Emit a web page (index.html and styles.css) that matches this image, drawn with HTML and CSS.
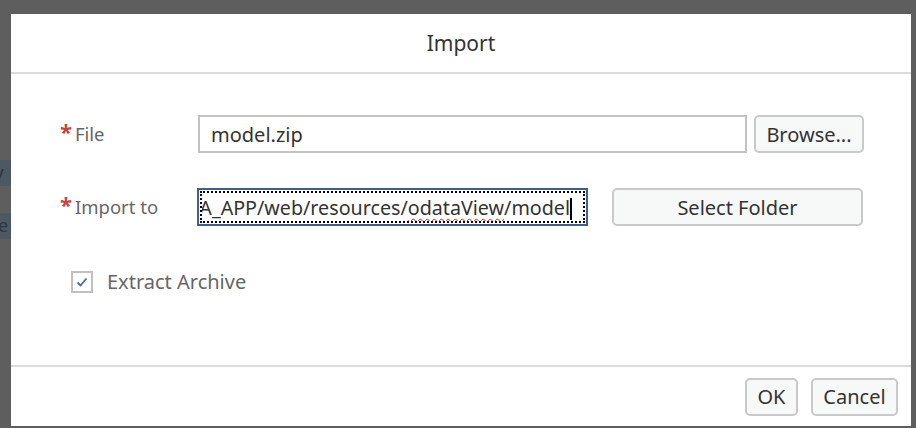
FILE: index.html
```html
<!DOCTYPE html>
<html>
<head>
<meta charset="utf-8">
<link rel="stylesheet" href="styles.css">
</head>
<body>
<div class="backdrop">
  <div class="bg-strip">
    <div class="bg-item bg-item-1">ry</div>
    <div class="bg-item bg-item-2">e</div>
  </div>
  <div class="dialog">
    <div class="header">Import</div>
    <div class="content">
      <div class="row row-file">
        <div class="label"><span class="req">*</span>File</div>
        <div class="input input-file">model.zip</div>
        <button class="btn btn-browse">Browse...</button>
      </div>
      <div class="row row-import">
        <div class="label"><span class="req">*</span>Import to</div>
        <div class="input input-focus">
          <div class="focus-ring">
            <span class="scroll-text">ODATA_APP/web/resources/<span class="spell">odataView</span>/model<span class="caret"></span></span>
          </div>
        </div>
        <button class="btn btn-folder">Select Folder</button>
      </div>
      <div class="check-row">
        <span class="checkbox">
          <svg width="14" height="12" viewBox="0 0 14 12"><path d="M2.5 6.5 L5.5 9.5 L11.5 2.5" fill="none" stroke="#3f6a99" stroke-width="1.8"/></svg>
        </span>
        <span class="check-label">Extract Archive</span>
      </div>
    </div>
    <div class="footer">
      <button class="btn btn-ok">OK</button>
      <button class="btn btn-cancel">Cancel</button>
    </div>
  </div>
</div>
</body>
</html>
```
FILE: styles.css
```css
html, body {
  margin: 0;
  padding: 0;
}
body {
  width: 916px;
  height: 428px;
  overflow: hidden;
  background: #5e5e5e;
  font-family: "Noto Sans", "Open Sans", sans-serif;
}
.backdrop {
  position: relative;
  width: 916px;
  height: 428px;
}
.bg-strip {
  position: absolute;
  left: 0;
  top: 0;
  width: 11px;
  height: 428px;
  overflow: hidden;
}
.bg-item {
  position: absolute;
  left: 0;
  width: 11px;
  height: 26px;
  background: #4d5863;
  color: #2c3540;
  font-size: 18px;
  line-height: 24px;
  overflow: hidden;
  white-space: nowrap;
  text-indent: -13px;
}
.bg-item-1 { top: 160px; }
.bg-item-2 { top: 213px; text-indent: -2px; }
.dialog {
  position: absolute;
  left: 11px;
  top: 14px;
  width: 900px;
  height: 412px;
  background: #ffffff;
  display: flex;
  flex-direction: column;
}
.header {
  height: 58px;
  border-bottom: 2px solid #dcdcdc;
  display: flex;
  align-items: center;
  justify-content: center;
  font-size: 21px;
  color: #333333;
}
.content {
  flex: 1;
  padding: 41px 0 0 0;
  box-sizing: border-box;
}
.row {
  display: flex;
  align-items: center;
  height: 38px;
}
.row-import {
  margin-top: 35px;
}
.label {
  width: 186px;
  padding-left: 49px;
  box-sizing: border-box;
  font-size: 18.5px;
  color: #666666;
  display: flex;
  align-items: center;
  position: relative;
  top: -1px;
}
.req {
  color: #c14646;
  font-size: 22px;
  font-weight: bold;
  margin-right: 3px;
  position: relative;
  top: -2px;
}
.input {
  box-sizing: border-box;
  height: 38px;
  font-size: 20px;
  color: #333333;
}
.input-file {
  width: 549px;
  margin-left: 1px;
  border: 2px solid #c2c2c2;
  padding-left: 11px;
  display: flex;
  align-items: center;
}
.input-focus {
  width: 391px;
  border: 2px solid #3e5f89;
  padding: 1px;
}
.focus-ring {
  height: 100%;
  box-sizing: border-box;
  border: 2px dotted #000000;
  overflow: hidden;
  display: flex;
  justify-content: flex-end;
  align-items: center;
  white-space: nowrap;
  padding-right: 11px;
  font-size: 19.7px;
}
.spell {
  text-decoration: underline wavy #ee1c1c;
  text-decoration-thickness: 1px;
  text-underline-offset: 3px;
}
.caret {
  display: inline-block;
  width: 2px;
  height: 22px;
  background: #000;
  vertical-align: -5px;
  margin-left: 0;
}
.btn {
  box-sizing: border-box;
  height: 38px;
  border: 2px solid #c9c9c9;
  border-radius: 5px;
  background: #f7f8f8;
  color: #333333;
  font-family: "Noto Sans", "Open Sans", sans-serif;
  font-size: 20px;
  padding: 0;
  cursor: default;
}
.btn-browse {
  width: 110px;
  margin-left: 7px;
}
.btn-folder {
  width: 251px;
  margin-left: 24px;
}
.check-row {
  display: flex;
  align-items: center;
  margin-top: 42px;
  padding-left: 60px;
}
.checkbox {
  width: 22px;
  height: 22px;
  box-sizing: border-box;
  border: 2px solid #c0c0c0;
  display: flex;
  align-items: center;
  justify-content: center;
}
.check-label {
  margin-left: 14px;
  font-size: 20px;
  color: #666666;
}
.footer {
  height: 59px;
  border-top: 2px solid #dcdcdc;
  display: flex;
  align-items: center;
  justify-content: flex-end;
  gap: 13px;
  padding-right: 13px;
}
.btn-ok {
  width: 53px;
}
.btn-cancel {
  width: 87px;
}
```
